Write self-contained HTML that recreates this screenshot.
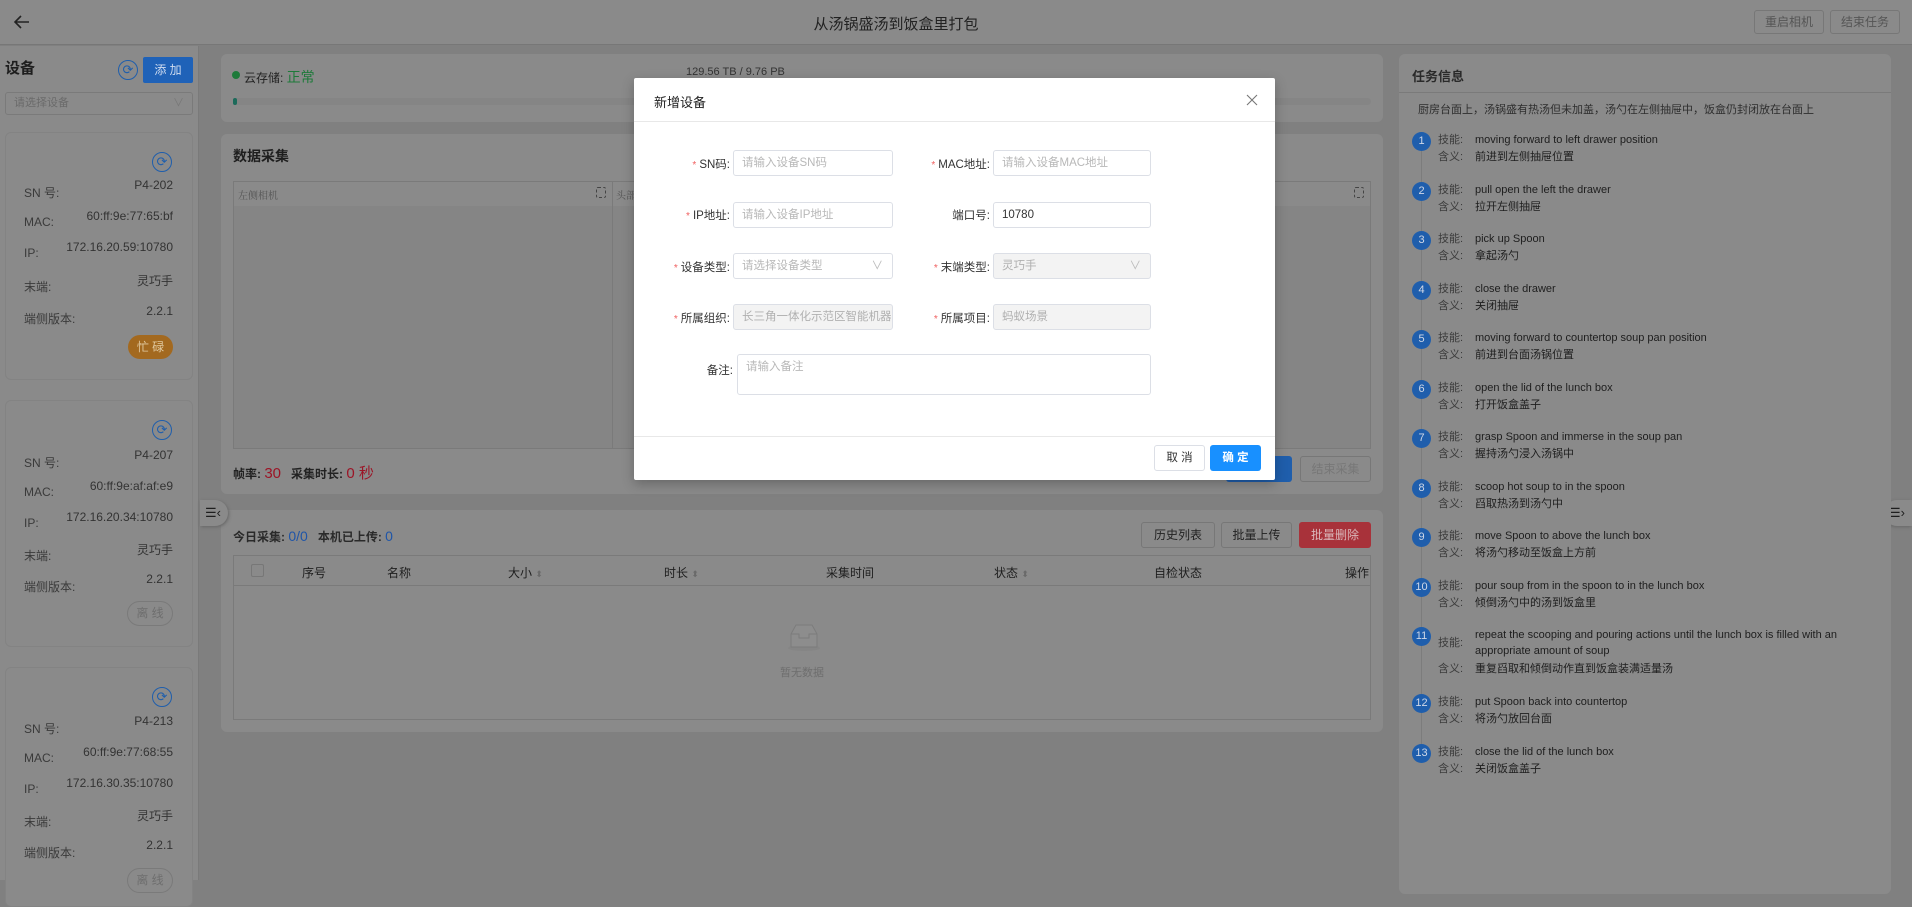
<!DOCTYPE html>
<html><head><meta charset="utf-8">
<style>
*{box-sizing:border-box;margin:0;padding:0}
body{width:1912px;height:880px;overflow:hidden;background:#808080;font-family:"Liberation Sans","Noto Sans CJK SC",sans-serif;font-size:12px;color:#1e1e1e;position:relative}
.a{position:absolute}
.card{position:absolute;background:#8a8a8a;border-radius:6px}
.lbl{color:#3a3a3a}
.ic{position:absolute;width:20px;height:20px;border:1.5px solid #1f5eac;border-radius:50%;color:#1f5eac;font-size:13px;line-height:17px;text-align:center}
.btn{position:absolute;border:1px solid #777;border-radius:3px;text-align:center;color:#555;font-size:12px;background:#8a8a8a}
.step{position:absolute;left:1412px;width:460px}
.num{position:absolute;left:0;width:19px;height:19px;border-radius:50%;background:#1f5eac;color:#cfd8e8;font-size:11px;text-align:center;line-height:19px}
.step .t{position:absolute;left:26px;color:#3c3c3c;font-size:11px;line-height:16px}
.step .v{position:absolute;left:63px;font-size:11px;color:#1e1e1e;line-height:16px}
.inp{position:absolute;height:26px;border:1px solid #dcdfe6;border-radius:3px;color:#b8b8b8;font-size:11.5px;padding-left:8px;line-height:24px;background:#fff}
.dis{background:#f3f3f3;color:#b0b0b0}
.fl{position:absolute;text-align:right;font-size:11.5px;color:#333}
.fl b{color:#f06060;font-weight:normal;font-size:10px;margin-right:3px}
</style></head><body>
<!-- header -->
<div class="a" style="left:0;top:0;width:1912px;height:45px;background:#8a8a8a;border-bottom:1px solid #777"></div>
<svg class="a" style="left:12px;top:12px" width="20" height="20" viewBox="0 0 20 20"><path d="M17 10H3M9 4L3 10l6 6" stroke="#222" stroke-width="1.6" fill="none"/></svg>
<div class="a" style="left:780px;top:13px;width:232px;text-align:center;font-size:15px;color:#222">从汤锅盛汤到饭盒里打包</div>
<div class="btn" style="left:1754px;top:10px;width:70px;height:24px;line-height:22px">重启相机</div>
<div class="btn" style="left:1830px;top:10px;width:70px;height:24px;line-height:22px">结束任务</div>
<!-- left panel -->
<div class="a" style="left:0;top:46px;width:199px;height:834px;background:#8a8a8a;border-right:1px solid #7a7a7a"></div>
<div class="a" style="left:5px;top:57px;font-size:15px;font-weight:bold">设备</div>
<div class="ic" style="left:118px;top:60px">⟳</div>
<div class="a" style="left:143px;top:57px;width:50px;height:26px;background:#1f62b8;color:#cfdcf0;text-align:center;line-height:26px;border-radius:2px">添 加</div>
<div class="a" style="left:5px;top:92px;width:188px;height:23px;border:1px solid #7a7a7a;border-radius:3px;color:#6a6a6a;padding-left:8px;line-height:21px;font-size:11px">请选择设备<span style="position:absolute;right:8px;color:#777">∨</span></div>

<div class="card" style="left:5px;top:132px;width:188px;height:248px;border:1px solid #838383"></div>
<div class="ic" style="left:152px;top:152px">⟳</div>
<div class="a lbl" style="left:24px;top:184px">SN 号:</div><div class="a" style="left:60px;top:178px;width:113px;text-align:right;color:#333">P4-202</div>
<div class="a lbl" style="left:24px;top:215px">MAC:</div><div class="a" style="left:60px;top:209px;width:113px;text-align:right;color:#333">60:ff:9e:77:65:bf</div>
<div class="a lbl" style="left:24px;top:246px">IP:</div><div class="a" style="left:50px;top:240px;width:123px;text-align:right;color:#333">172.16.20.59:10780</div>
<div class="a lbl" style="left:24px;top:278px">末端:</div><div class="a" style="left:60px;top:272px;width:113px;text-align:right;color:#333">灵巧手</div>
<div class="a lbl" style="left:24px;top:310px">端侧版本:</div><div class="a" style="left:60px;top:304px;width:113px;text-align:right;color:#333">2.2.1</div>
<div class="a" style="left:128px;top:335px;width:45px;height:24px;border-radius:12px;background:#a3691f;color:#e0c9a0;text-align:center;line-height:24px">忙 碌</div>

<div class="card" style="left:5px;top:400px;width:188px;height:247px;border:1px solid #838383"></div>
<div class="ic" style="left:152px;top:420px">⟳</div>
<div class="a lbl" style="left:24px;top:454px">SN 号:</div><div class="a" style="left:60px;top:448px;width:113px;text-align:right;color:#333">P4-207</div>
<div class="a lbl" style="left:24px;top:485px">MAC:</div><div class="a" style="left:60px;top:479px;width:113px;text-align:right;color:#333">60:ff:9e:af:af:e9</div>
<div class="a lbl" style="left:24px;top:516px">IP:</div><div class="a" style="left:50px;top:510px;width:123px;text-align:right;color:#333">172.16.20.34:10780</div>
<div class="a lbl" style="left:24px;top:547px">末端:</div><div class="a" style="left:60px;top:541px;width:113px;text-align:right;color:#333">灵巧手</div>
<div class="a lbl" style="left:24px;top:578px">端侧版本:</div><div class="a" style="left:60px;top:572px;width:113px;text-align:right;color:#333">2.2.1</div>
<div class="a" style="left:127px;top:601px;width:46px;height:25px;border-radius:13px;border:1px solid #7a7a7a;color:#6e6e6e;text-align:center;line-height:23px">离 线</div>

<div class="card" style="left:5px;top:667px;width:188px;height:240px;border:1px solid #838383"></div>
<div class="ic" style="left:152px;top:687px">⟳</div>
<div class="a lbl" style="left:24px;top:720px">SN 号:</div><div class="a" style="left:60px;top:714px;width:113px;text-align:right;color:#333">P4-213</div>
<div class="a lbl" style="left:24px;top:751px">MAC:</div><div class="a" style="left:60px;top:745px;width:113px;text-align:right;color:#333">60:ff:9e:77:68:55</div>
<div class="a lbl" style="left:24px;top:782px">IP:</div><div class="a" style="left:50px;top:776px;width:123px;text-align:right;color:#333">172.16.30.35:10780</div>
<div class="a lbl" style="left:24px;top:813px">末端:</div><div class="a" style="left:60px;top:807px;width:113px;text-align:right;color:#333">灵巧手</div>
<div class="a lbl" style="left:24px;top:844px">端侧版本:</div><div class="a" style="left:60px;top:838px;width:113px;text-align:right;color:#333">2.2.1</div>
<div class="a" style="left:127px;top:868px;width:46px;height:25px;border-radius:13px;border:1px solid #7a7a7a;color:#6e6e6e;text-align:center;line-height:23px">离 线</div>

<!-- cloud card -->
<div class="card" style="left:221px;top:54px;width:1162px;height:68px"></div>
<div class="a" style="left:232px;top:71px;width:8px;height:8px;border-radius:50%;background:#1e7a3a"></div>
<div class="a" style="left:244px;top:67px;color:#222">云存储: <span style="color:#1e7a3a;font-size:14px">正常</span></div>
<div class="a" style="left:686px;top:66px;color:#333;font-size:11px">129.56 TB / 9.76 PB</div>
<div class="a" style="left:233px;top:98px;width:1138px;height:7px;background:#858585;border-radius:4px"></div>
<div class="a" style="left:233px;top:98px;width:4px;height:7px;background:#1c6a5a;border-radius:3px"></div>

<!-- data card -->
<div class="card" style="left:221px;top:134px;width:1162px;height:360px"></div>
<div class="a" style="left:233px;top:146px;font-size:14px;font-weight:bold">数据采集</div>
<div class="a" style="left:233px;top:181px;width:1138px;height:268px;border:1px solid #7a7a7a;background:#858585"></div>
<div class="a" style="left:234px;top:182px;width:1136px;height:24px;background:#8a8a8a"></div>
<div class="a" style="left:612px;top:182px;width:1px;height:266px;background:#7a7a7a"></div>
<div class="a" style="left:992px;top:182px;width:1px;height:266px;background:#7a7a7a"></div>
<div class="a" style="left:238px;top:187px;color:#555;font-size:10px;font-family:'Liberation Serif','Noto Serif CJK SC',serif">左侧相机</div>
<div class="a" style="left:616px;top:187px;color:#555;font-size:10px;font-family:'Liberation Serif','Noto Serif CJK SC',serif">头部相机</div>
<div class="a" style="left:596px;top:187px;width:10px;height:11px;border:1.5px dashed #444;border-radius:2px"></div>
<div class="a" style="left:1354px;top:187px;width:10px;height:11px;border:1.5px dashed #444;border-radius:2px"></div>
<div class="a" style="left:233px;top:462px;font-weight:bold;color:#222">帧率: <span style="color:#9c1426;font-size:15px;font-weight:normal">30</span>&nbsp;&nbsp;&nbsp;采集时长: <span style="color:#9c1426;font-size:15px;font-weight:normal">0 秒</span></div>
<div class="a" style="left:1226px;top:456px;width:66px;height:26px;background:#1f5eac;border-radius:3px"></div>
<div class="btn" style="left:1300px;top:456px;width:71px;height:26px;line-height:24px;color:#777">结束采集</div>

<!-- table card -->
<div class="card" style="left:221px;top:510px;width:1162px;height:222px"></div>
<div class="a" style="left:233px;top:528px;font-weight:bold;color:#2a2a2a">今日采集: <span style="color:#1f55a8;font-size:14px;font-weight:normal">0/0</span>&nbsp;&nbsp;&nbsp;本机已上传: <span style="color:#1f55a8;font-size:14px;font-weight:normal">0</span></div>
<div class="btn" style="left:1141px;top:522px;width:74px;height:26px;line-height:24px;color:#222">历史列表</div>
<div class="btn" style="left:1221px;top:522px;width:71px;height:26px;line-height:24px;color:#222">批量上传</div>
<div class="a" style="left:1299px;top:522px;width:72px;height:26px;line-height:26px;background:#a8323a;border-radius:3px;color:#dab8bb;text-align:center">批量删除</div>
<div class="a" style="left:233px;top:555px;width:1138px;height:165px;border:1px solid #7a7a7a"></div>
<div class="a" style="left:234px;top:556px;width:1136px;height:30px;border-bottom:1px solid #7a7a7a"></div>
<div class="a" style="left:251px;top:564px;width:13px;height:13px;border:1px solid #777;border-radius:2px"></div>
<div class="a" style="left:302px;top:564px">序号</div>
<div class="a" style="left:387px;top:564px">名称</div>
<div class="a" style="left:508px;top:564px">大小 <span style="color:#6a6a6a;font-size:9px">⬍</span></div>
<div class="a" style="left:664px;top:564px">时长 <span style="color:#6a6a6a;font-size:9px">⬍</span></div>
<div class="a" style="left:826px;top:564px">采集时间</div>
<div class="a" style="left:994px;top:564px">状态 <span style="color:#6a6a6a;font-size:9px">⬍</span></div>
<div class="a" style="left:1154px;top:564px">自检状态</div>
<div class="a" style="left:1345px;top:564px">操作</div>
<svg class="a" style="left:786px;top:622px" width="36" height="30" viewBox="0 0 36 30"><ellipse cx="18" cy="26" rx="16" ry="3" fill="#858585"/><path d="M5 12L10 3h16l5 9v13H5z" fill="#8d8d8d" stroke="#7c7c7c"/><path d="M5 12h8v4h10v-4h8" fill="none" stroke="#7c7c7c"/></svg>
<div class="a" style="left:780px;top:664px;color:#6e6e6e;font-size:11px">暂无数据</div>

<!-- side toggles -->
<div class="a" style="left:200px;top:500px;width:28px;height:26px;background:#8a8a8a;border-radius:0 13px 13px 0;box-shadow:1px 1px 3px #666;font-size:13px;line-height:26px;padding-left:5px">☰‹</div>
<div class="a" style="left:1884px;top:500px;width:28px;height:26px;background:#8a8a8a;border-radius:13px 0 0 13px;box-shadow:-1px 1px 3px #666;font-size:13px;line-height:26px;padding-left:5px">☰›</div>

<!-- right panel -->
<div class="card" style="left:1399px;top:54px;width:492px;height:840px"></div>
<div class="a" style="left:1399px;top:92px;width:492px;height:1px;background:#7a7a7a"></div>
<div class="a" style="left:1412px;top:66px;font-size:13px;font-weight:bold;color:#2a2a2a">任务信息</div>
<div class="a" style="left:1418px;top:101px;font-size:11px;color:#2e2e2e">厨房台面上，汤锅盛有热汤但未加盖，汤勺在左侧抽屉中，饭盒仍封闭放在台面上</div>
<div class="a" style="left:1421px;top:150px;width:1px;height:600px;background:#7c7c7c"></div>

<div class="step" style="top:132px"><div class="num">1</div><div class="t" style="top:0">技能:</div><div class="v" style="top:0">moving forward to left drawer position</div><div class="t" style="top:17px">含义:</div><div class="v" style="top:17px">前进到左侧抽屉位置</div></div>
<div class="step" style="top:182px"><div class="num">2</div><div class="t" style="top:0">技能:</div><div class="v" style="top:0">pull open the left the drawer</div><div class="t" style="top:17px">含义:</div><div class="v" style="top:17px">拉开左侧抽屉</div></div>
<div class="step" style="top:231px"><div class="num">3</div><div class="t" style="top:0">技能:</div><div class="v" style="top:0">pick up Spoon</div><div class="t" style="top:17px">含义:</div><div class="v" style="top:17px">拿起汤勺</div></div>
<div class="step" style="top:281px"><div class="num">4</div><div class="t" style="top:0">技能:</div><div class="v" style="top:0">close the drawer</div><div class="t" style="top:17px">含义:</div><div class="v" style="top:17px">关闭抽屉</div></div>
<div class="step" style="top:330px"><div class="num">5</div><div class="t" style="top:0">技能:</div><div class="v" style="top:0">moving forward to countertop soup pan position</div><div class="t" style="top:17px">含义:</div><div class="v" style="top:17px">前进到台面汤锅位置</div></div>
<div class="step" style="top:380px"><div class="num">6</div><div class="t" style="top:0">技能:</div><div class="v" style="top:0">open the lid of the lunch box</div><div class="t" style="top:17px">含义:</div><div class="v" style="top:17px">打开饭盒盖子</div></div>
<div class="step" style="top:429px"><div class="num">7</div><div class="t" style="top:0">技能:</div><div class="v" style="top:0">grasp Spoon and immerse in the soup pan</div><div class="t" style="top:17px">含义:</div><div class="v" style="top:17px">握持汤勺浸入汤锅中</div></div>
<div class="step" style="top:479px"><div class="num">8</div><div class="t" style="top:0">技能:</div><div class="v" style="top:0">scoop hot soup to in the spoon</div><div class="t" style="top:17px">含义:</div><div class="v" style="top:17px">舀取热汤到汤勺中</div></div>
<div class="step" style="top:528px"><div class="num">9</div><div class="t" style="top:0">技能:</div><div class="v" style="top:0">move Spoon to above the lunch box</div><div class="t" style="top:17px">含义:</div><div class="v" style="top:17px">将汤勺移动至饭盒上方前</div></div>
<div class="step" style="top:578px"><div class="num">10</div><div class="t" style="top:0">技能:</div><div class="v" style="top:0">pour soup from in the spoon to in the lunch box</div><div class="t" style="top:17px">含义:</div><div class="v" style="top:17px">倾倒汤勺中的汤到饭盒里</div></div>
<div class="step" style="top:627px"><div class="num">11</div><div class="t" style="top:8px">技能:</div><div class="v" style="top:0;width:400px">repeat the scooping and pouring actions until the lunch box is filled with an appropriate amount of soup</div><div class="t" style="top:34px">含义:</div><div class="v" style="top:34px">重复舀取和倾倒动作直到饭盒装满适量汤</div></div>
<div class="step" style="top:694px"><div class="num">12</div><div class="t" style="top:0">技能:</div><div class="v" style="top:0">put Spoon back into countertop</div><div class="t" style="top:17px">含义:</div><div class="v" style="top:17px">将汤勺放回台面</div></div>
<div class="step" style="top:744px"><div class="num">13</div><div class="t" style="top:0">技能:</div><div class="v" style="top:0">close the lid of the lunch box</div><div class="t" style="top:17px">含义:</div><div class="v" style="top:17px">关闭饭盒盖子</div></div>

<!-- modal -->
<div class="a" style="left:634px;top:78px;width:641px;height:402px;background:#fff;border-radius:2px;box-shadow:0 4px 12px rgba(0,0,0,.25)"></div>
<div class="a" style="left:654px;top:92px;font-size:13px;color:#222">新增设备</div>
<svg class="a" style="left:1246px;top:94px" width="12" height="12" viewBox="0 0 12 12"><path d="M1 1l10 10M11 1L1 11" stroke="#777" stroke-width="1.1"/></svg>
<div class="a" style="left:634px;top:121px;width:641px;height:1px;background:#e8e8e8"></div>

<div class="fl" style="left:640px;top:156px;width:90px"><b>*</b>SN码:</div>
<div class="inp" style="left:733px;top:150px;width:160px">请输入设备SN码</div>
<div class="fl" style="left:900px;top:156px;width:90px"><b>*</b>MAC地址:</div>
<div class="inp" style="left:993px;top:150px;width:158px">请输入设备MAC地址</div>

<div class="fl" style="left:640px;top:207px;width:90px"><b>*</b>IP地址:</div>
<div class="inp" style="left:733px;top:202px;width:160px">请输入设备IP地址</div>
<div class="fl" style="left:900px;top:207px;width:90px">端口号:</div>
<div class="inp" style="left:993px;top:202px;width:158px;color:#333">10780</div>

<div class="fl" style="left:640px;top:259px;width:90px"><b>*</b>设备类型:</div>
<div class="inp" style="left:733px;top:253px;width:160px">请选择设备类型<span style="position:absolute;right:9px;color:#bbb">∨</span></div>
<div class="fl" style="left:900px;top:259px;width:90px"><b>*</b>末端类型:</div>
<div class="inp dis" style="left:993px;top:253px;width:158px">灵巧手<span style="position:absolute;right:9px;color:#bbb">∨</span></div>

<div class="fl" style="left:640px;top:310px;width:90px"><b>*</b>所属组织:</div>
<div class="inp dis" style="left:733px;top:304px;width:160px;overflow:hidden;white-space:nowrap">长三角一体化示范区智能机器</div>
<div class="fl" style="left:900px;top:310px;width:90px"><b>*</b>所属项目:</div>
<div class="inp dis" style="left:993px;top:304px;width:158px">蚂蚁场景</div>

<div class="fl" style="left:640px;top:362px;width:93px">备注:</div>
<div class="inp" style="left:737px;top:354px;width:414px;height:41px;line-height:20px;padding-top:2px">请输入备注</div>

<div class="a" style="left:634px;top:436px;width:641px;height:1px;background:#e8e8e8"></div>
<div class="a" style="left:1154px;top:445px;width:51px;height:26px;border:1px solid #dcdfe6;border-radius:3px;text-align:center;line-height:24px;color:#333;font-size:11.5px">取 消</div>
<div class="a" style="left:1210px;top:445px;width:51px;height:26px;background:#1890ff;border-radius:3px;text-align:center;line-height:26px;color:#fff;font-size:11.5px;font-weight:bold">确 定</div>
</body></html>
